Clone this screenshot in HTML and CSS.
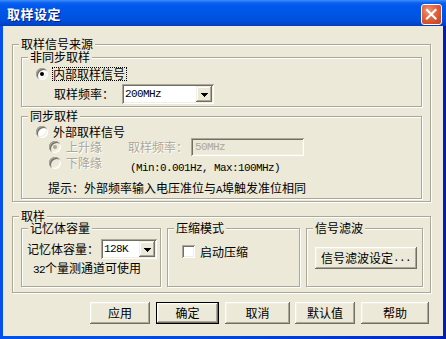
FILE: index.html
```html
<!DOCTYPE html>
<html lang="zh-CN">
<head>
<meta charset="utf-8">
<title>取样设定</title>
<link rel="stylesheet" href="styles.css">
</head>
<body>
<div class="window">
  <div class="titlebar">
    <span class="title">取样设定</span>
    <span class="close"><svg width="19" height="19" viewBox="0 0 19 19"><path d="M5 5 L13.5 13.5 M13.5 5 L5 13.5" stroke="#fff" stroke-width="2.2" stroke-linecap="square" fill="none"/></svg></span>
  </div>
  <div class="client">
    <div class="group g-source">
      <span class="legend">取样信号来源</span>
      <div class="group g-async">
        <span class="legend">非同步取样</span>
        <div class="row r-internal">
          <span class="radio on"></span><span class="label focus">内部取样信号</span>
        </div>
        <div class="row r-freq">
          <span class="label w-freq">取样频率<span class="colon">：</span></span>
          <span class="field combo c-200"><span class="val a">200MHz</span><span class="drop"><svg width="7" height="4" viewBox="0 0 7 4" shape-rendering="crispEdges"><path d="M0 0h7v1h-1v1h-1v1h-1v1h-1v-1h-1v-1h-1v-1h-1z" fill="#000"/></svg></span></span>
        </div>
      </div>
      <div class="group g-sync">
        <span class="legend">同步取样</span>
        <div class="row r-external">
          <span class="radio"></span><span class="label lbl">外部取样信号</span>
        </div>
        <div class="row r-rise">
          <span class="radio on disabled"></span><span class="label lbl dis">上升缘</span>
          <span class="label dis ext-freq">取样频率<span class="colon">：</span></span>
          <span class="field edit disabled-field"><span class="val a">50MHz</span></span>
        </div>
        <div class="row r-fall">
          <span class="radio disabled"></span><span class="label lbl dis">下降缘</span>
          <span class="label range a">(Min:0.001Hz, Max:100MHz)</span>
        </div>
        <div class="row r-hint">
          <span class="label">提示<span class="colon">：</span>外部频率输入电压准位与<span class="a">A</span>埠触发准位相同</span>
        </div>
      </div>
    </div>

    <div class="group g-sample">
      <span class="legend">取样</span>
      <div class="subgroups">
        <div class="group g-mem">
          <span class="legend">记忆体容量</span>
          <div class="row r-mem">
            <span class="label">记忆体容量<span class="colon">：</span></span>
            <span class="field combo c-128"><span class="val a">128K</span><span class="drop"><svg width="7" height="4" viewBox="0 0 7 4" shape-rendering="crispEdges"><path d="M0 0h7v1h-1v1h-1v1h-1v1h-1v-1h-1v-1h-1v-1h-1z" fill="#000"/></svg></span></span>
          </div>
          <div class="row r-channels">
            <span class="label"><span class="a">32</span>个量测通道可使用</span>
          </div>
        </div>
        <div class="group g-comp">
          <span class="legend">压缩模式</span>
          <div class="row r-check">
            <span class="checkbox"></span><span class="label">启动压缩</span>
          </div>
        </div>
        <div class="group g-filter">
          <span class="legend">信号滤波</span>
          <span class="btn filter-btn">信号滤波设定<span class="a">...</span></span>
        </div>
      </div>
    </div>

    <div class="buttons">
      <span class="btn b-apply">应用</span>
      <span class="btn default b-ok">确定</span>
      <span class="btn b-cancel">取消</span>
      <span class="btn b-default">默认值</span>
      <span class="btn b-help">帮助</span>
    </div>
  </div>
</div>
</body>
</html>
```

FILE: styles.css
```css
* { box-sizing: border-box; margin: 0; padding: 0; }

html, body {
  width: 446px;
  height: 339px;
  overflow: hidden;
}

body {
  font-family: "Noto Sans CJK SC", "Noto Sans", sans-serif;
  font-size: 12px;
  line-height: 14px;
  color: #000;
  background: #0831d9;
}

.a {
  font-family: "Liberation Mono", monospace;
  font-size: 11px;
  letter-spacing: -0.6px;
}

.colon {
  font-family: "Noto Sans CJK TC", "Noto Sans CJK SC", sans-serif;
}

.window {
  width: 446px;
  height: 339px;
  display: flex;
  flex-direction: column;
  background: linear-gradient(to right, #0a4cf0 0, #0053ee 2px, #0047dd 50%, #0028c8 98%, #001ea8 100%);
}

/* ---------- title bar ---------- */
.titlebar {
  height: 26px;
  flex: none;
  display: flex;
  justify-content: space-between;
  align-items: flex-start;
  padding: 4px 4px 0 7px;
  background: linear-gradient(to bottom, #3d8ef8 0, #0a60f0 3px, #0058ee 6px, #0055e5 14px, #0050dc 20px, #0046cc 24px, #003cb8 26px);
}

.title {
  color: #fff;
  font-weight: bold;
  font-size: 13px;
  line-height: 20px;
  letter-spacing: 0.5px;
  text-shadow: 1px 1px 0 #0a1e7a;
}

.close {
  width: 21px;
  height: 21px;
  border: 1px solid #fff;
  border-radius: 3px;
  background: radial-gradient(circle at 35% 30%, #f09a7a 0, #e36a47 35%, #d4502c 70%, #c2401d 100%);
  display: flex;
  align-items: center;
  justify-content: center;
}

/* ---------- client ---------- */
.client {
  flex: 1;
  margin: 0 3px 3px 3px;
  background: #ece9d8;
  padding: 18px 12px 0 9px;
  display: flex;
  flex-direction: column;
}

.group {
  position: relative;
  border: 1px solid #aca899;
  box-shadow: inset 1px 1px 0 #fff, 1px 1px 0 #fff;
}

.legend {
  position: absolute;
  top: -7px;
  left: 6px;
  padding: 0 2px;
  line-height: 12px;
  background: #ece9d8;
  white-space: nowrap;
}

.row {
  display: flex;
  align-items: center;
}

.label { white-space: nowrap; line-height: 14px; }

/* group 1 */
.g-source {
  width: 419px;
  height: 158px;
  padding: 12px 0 0 8px;
}

.g-async {
  width: 401px;
  height: 50px;
  padding-left: 14px;
}

.r-internal { margin-top: 9px; height: 14px; }

.focus {
  margin-left: 4px;
  border: 1px dotted #000;
  padding-right: 1px;
  line-height: 12px;
}

.lbl { margin-left: 5px; }

.r-freq { margin-top: 3px; height: 20px; }
.w-freq { margin-left: 18px; width: 68px; }

.g-sync {
  width: 401px;
  height: 83px;
  margin-top: 9px;
  padding-left: 14px;
}

.r-external { margin-top: 8px; height: 13px; }

.r-rise { height: 18px; }
.r-rise .radio { margin-left: 13px; }
.ext-freq { margin-left: 26px; }

.r-fall { align-items: flex-start; }
.r-fall .radio { margin-left: 13px; margin-top: 1px; }
.range { margin-left: 28px; margin-top: 5px; }

.r-hint { margin-top: 6px; margin-left: 12px; }

.dis {
  color: #aca899;
  text-shadow: 1px 1px 0 #fff;
}

/* ---------- controls ---------- */
.radio {
  position: relative;
  flex: none;
  width: 12px;
  height: 12px;
  border-radius: 50%;
  background: #fff;
  box-shadow: inset 1px 1px 0 #aca899, inset -1px -1px 0 #fff, inset 2px 2px 0 #716f64, inset -2px -2px 0 #f1efe2;
}

.radio.disabled { background: #ece9d8; }

.radio.on::after {
  content: "";
  position: absolute;
  left: 4px;
  top: 4px;
  width: 4px;
  height: 4px;
  border-radius: 50%;
  background: #000;
}

.radio.on.disabled::after { background: #aca899; }

.checkbox {
  flex: none;
  width: 13px;
  height: 13px;
  background: #fff;
  box-shadow: inset 1px 1px 0 #aca899, inset -1px -1px 0 #fff, inset 2px 2px 0 #716f64, inset -2px -2px 0 #f1efe2;
}

.field {
  display: flex;
  align-items: center;
  padding: 2px;
  background: #fff;
  box-shadow: inset 1px 1px 0 #aca899, inset -1px -1px 0 #fff, inset 2px 2px 0 #716f64, inset -2px -2px 0 #f1efe2;
}

.field .val {
  flex: 1;
  padding-left: 1px;
  line-height: 14px;
  white-space: nowrap;
}

.combo { height: 20px; }
.c-200 { width: 92px; }
.c-128 { width: 56px; margin-left: 2px; }

.drop {
  flex: none;
  width: 16px;
  height: 16px;
  display: flex;
  align-items: center;
  justify-content: center;
  padding-top: 1px;
  background: #ece9d8;
  box-shadow: inset -1px -1px 0 #716f64, inset 1px 1px 0 #f1efe2, inset -2px -2px 0 #aca899, inset 2px 2px 0 #fff;
}

.edit {
  width: 113px;
  height: 18px;
  margin-left: 3px;
}

.disabled-field { background: #ece9d8; }
.disabled-field .val { color: #aca899; padding-left: 2px; }

/* ---------- group 2 ---------- */
.g-sample {
  width: 419px;
  height: 77px;
  margin-top: 14px;
  padding: 11px 0 0 8px;
}

.subgroups {
  display: flex;
  gap: 6px;
}

.g-mem { width: 140px; height: 59px; padding-left: 5px; }
.r-mem { margin-top: 10px; height: 20px; }
.r-channels { margin-top: 2px; margin-left: 6px; }

.g-comp { width: 133px; height: 59px; padding-left: 14px; }
.r-check { margin-top: 16px; height: 13px; }
.r-check .label { margin-left: 5px; }

.g-filter { width: 117px; height: 59px; padding-left: 8px; }
.filter-btn { margin-top: 18px; width: 102px; }

/* ---------- buttons ---------- */
.btn {
  display: flex;
  align-items: center;
  justify-content: center;
  height: 22px;
  background: #ece9d8;
  white-space: nowrap;
  box-shadow: inset -1px -1px 0 #716f64, inset 1px 1px 0 #fff, inset -2px -2px 0 #aca899, inset 2px 2px 0 #f1efe2;
}

.btn.default {
  border: 1px solid #000;
}

.buttons {
  display: flex;
  justify-content: flex-end;
  gap: 6px;
  margin-top: 9px;
  padding-right: 2px;
}

.b-apply { width: 60px; }
.b-ok { width: 63px; }
.b-cancel { width: 65px; }
.b-default { width: 60px; margin-left: -1px; }
.b-help { width: 68px; }
```
